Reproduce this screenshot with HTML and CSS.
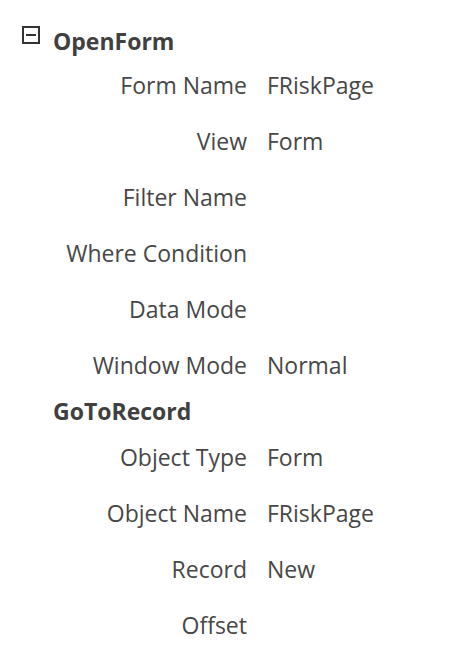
FILE: index.html
```html
<!DOCTYPE html>
<html>
<head>
<meta charset="utf-8">
<link rel="stylesheet" href="styles.css">
</head>
<body>
<div class="sheet">
  <div class="heading">
    <span class="toggle"><svg width="18" height="18" viewBox="0 0 18 18"><rect x="1" y="1" width="16" height="16" fill="#fff" stroke="#333" stroke-width="2"/><rect x="4" y="8" width="10" height="2" fill="#333"/></svg></span>
    <span class="title">OpenForm</span>
  </div>
  <div class="row"><span class="label">Form Name</span><span class="value">FRiskPage</span></div>
  <div class="row"><span class="label">View</span><span class="value">Form</span></div>
  <div class="row"><span class="label">Filter Name</span><span class="value"></span></div>
  <div class="row"><span class="label">Where Condition</span><span class="value"></span></div>
  <div class="row"><span class="label">Data Mode</span><span class="value"></span></div>
  <div class="row"><span class="label">Window Mode</span><span class="value">Normal</span></div>
  <div class="heading heading-sub">
    <span class="title">GoToRecord</span>
  </div>
  <div class="row"><span class="label">Object Type</span><span class="value">Form</span></div>
  <div class="row"><span class="label">Object Name</span><span class="value">FRiskPage</span></div>
  <div class="row"><span class="label">Record</span><span class="value">New</span></div>
  <div class="row"><span class="label">Offset</span><span class="value"></span></div>
</div>
</body>
</html>
```

FILE: styles.css
```css
html, body {
  margin: 0;
  padding: 0;
  background: #ffffff;
}
body {
  font-family: "Open Sans", "Noto Sans", sans-serif;
  color: #474747;
  width: 465px;
  height: 648px;
  overflow: hidden;
}
.sheet {
  padding-top: 25px;
}
.heading {
  height: 32px;
  display: flex;
  align-items: center;
  padding-left: 22px;
}
.heading-sub {
  height: 36px;
  padding-left: 53px;
}
.toggle {
  width: 18px;
  height: 18px;
  display: flex;
  align-self: flex-start;
  margin-top: 1px;
  margin-right: 13px;
}
.title {
  font-weight: 700;
  font-size: 23px;
  color: #404040;
}
.row {
  height: 56px;
  display: grid;
  grid-template-columns: 247px 1fr;
  column-gap: 20px;
  align-items: center;
  font-size: 23px;
}
.label {
  text-align: right;
}
.value {
  text-align: left;
}
```
